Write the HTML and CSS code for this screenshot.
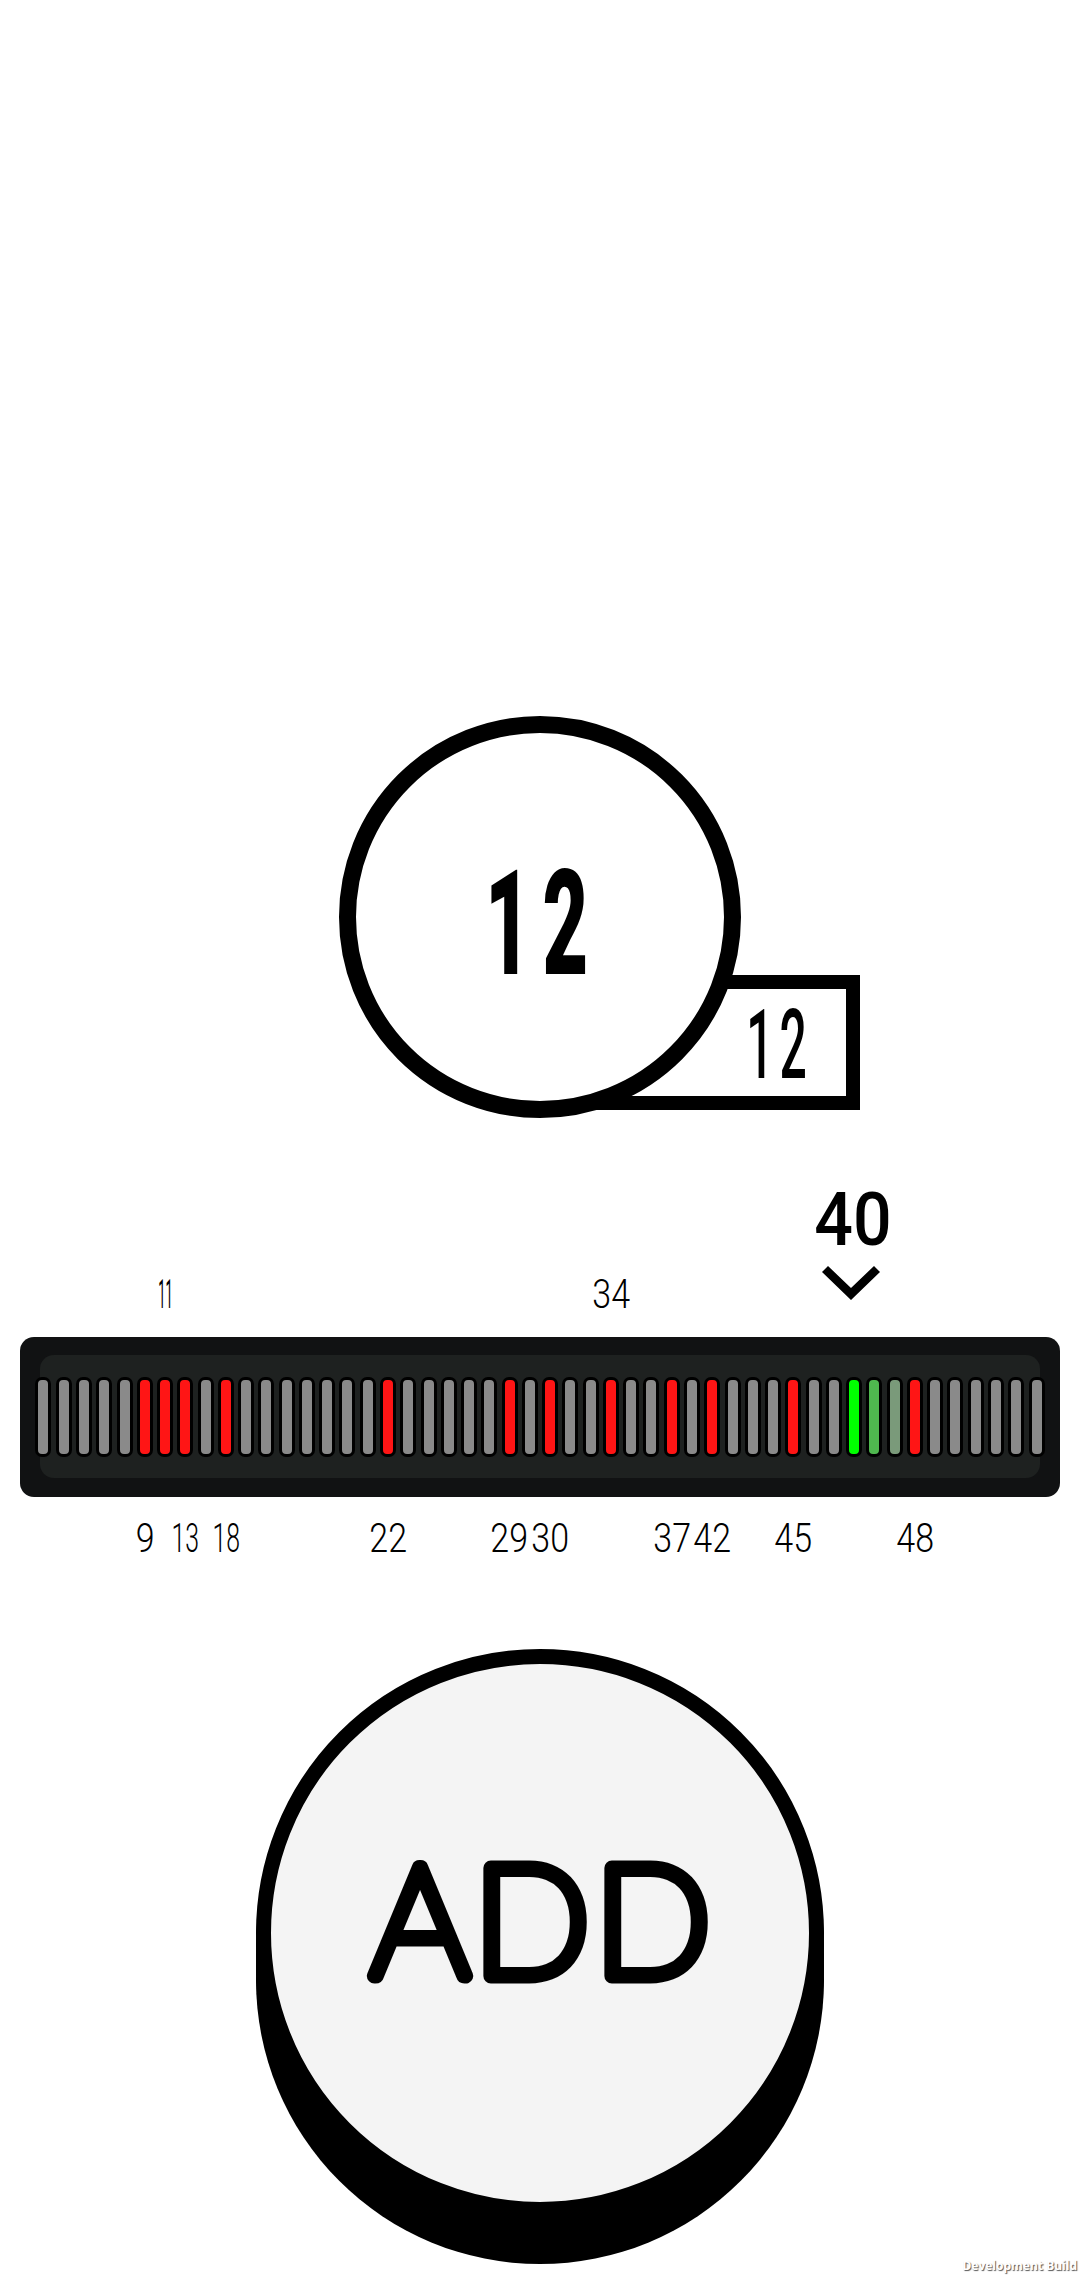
FILE: index.html
```html
<!DOCTYPE html>
<html lang="en">

<head>
    <meta charset="UTF-8">
    <meta name="viewport" content="width=device-width, initial-scale=1.0">
    <title>Counter</title>
    <link rel="stylesheet" href="styles.css">
</head>

<body>
    <main class="page">
        <section class="counter">
            <div class="counter-box"><span class="digits digits-mid">12</span></div>
            <div class="counter-circle"><span class="digits digits-big">12</span></div>
        </section>

        <!-- marks sit on the same 50 column grid as the ticks -->
        <div class="scale scale-top">
            <span class="digits digits-small ones" style="grid-column: 7">11</span>
            <span class="digits digits-small" style="grid-column: 29">34</span>
            <div class="pointer" style="grid-column: 41">
                <span class="digits digits-pointer">40</span>
                <svg class="chevron" width="58" height="34" viewBox="0 0 58 34">
                    <polygon points="0,6 6,0 29,22 52,0 58,6 29,34"></polygon>
                </svg>
            </div>
        </div>

        <div class="bar">
            <div class="bar-inner">
                <div class="scale ticks">
                    <i class="tick"></i><i class="tick"></i><i class="tick"></i><i class="tick"></i><i class="tick"></i>
                    <i class="tick red"></i><i class="tick red"></i><i class="tick red"></i><i class="tick"></i><i class="tick red"></i>
                    <i class="tick"></i><i class="tick"></i><i class="tick"></i><i class="tick"></i><i class="tick"></i>
                    <i class="tick"></i><i class="tick"></i><i class="tick red"></i><i class="tick"></i><i class="tick"></i>
                    <i class="tick"></i><i class="tick"></i><i class="tick"></i><i class="tick red"></i><i class="tick"></i>
                    <i class="tick red"></i><i class="tick"></i><i class="tick"></i><i class="tick red"></i><i class="tick"></i>
                    <i class="tick"></i><i class="tick red"></i><i class="tick"></i><i class="tick red"></i><i class="tick"></i>
                    <i class="tick"></i><i class="tick"></i><i class="tick red"></i><i class="tick"></i><i class="tick"></i>
                    <i class="tick green"></i><i class="tick green-mid"></i><i class="tick green-low"></i><i class="tick red"></i><i class="tick"></i>
                    <i class="tick"></i><i class="tick"></i><i class="tick"></i><i class="tick"></i><i class="tick"></i>
                </div>
            </div>
        </div>

        <div class="scale scale-bottom">
            <span class="digits digits-small" style="grid-column: 6">9</span>
            <span class="digits digits-small has-one" style="grid-column: 8">13</span>
            <span class="digits digits-small has-one" style="grid-column: 10">18</span>
            <span class="digits digits-small" style="grid-column: 18">22</span>
            <span class="digits digits-small" style="grid-column: 24">29</span>
            <span class="digits digits-small" style="grid-column: 26">30</span>
            <span class="digits digits-small" style="grid-column: 32">37</span>
            <span class="digits digits-small" style="grid-column: 34">42</span>
            <span class="digits digits-small" style="grid-column: 38">45</span>
            <span class="digits digits-small" style="grid-column: 44">48</span>
        </div>

        <button class="add-button">
            <svg class="add-label" width="400" height="160" viewBox="0 0 400 160">
                <text x="203" y="138" text-anchor="middle">ADD</text>
            </svg>
        </button>
    </main>

    <span class="build-tag">Development Build</span>
</body>

</html>
```

FILE: styles.css
```css
html, body {
    margin: 0;
    height: 2280px;
    overflow: hidden;
    background: #fff;
    font-family: Roboto, sans-serif;
}
.page {
    display: flex;
    flex-direction: column;
    align-items: center;
    padding-top: 716px;
}

/* counter circle + box behind it */
.counter {
    position: relative;
    width: 402px;
    height: 402px;
}
.counter-circle {
    position: relative;
    box-sizing: border-box;
    width: 402px;
    height: 402px;
    padding: 15px 0 0 6px;
    border: 17px solid #000;
    border-radius: 50%;
    background: #fff;
    display: flex;
    align-items: center;
    justify-content: center;
}
.counter-box {
    position: absolute;
    left: 200px;
    top: 259px;
    box-sizing: border-box;
    width: 321px;
    height: 135px;
    padding-top: 4px;
    border: 14px solid #000;
    background: #fff;
    display: flex;
    align-items: center;
    justify-content: flex-end;
}

/* lcd style numbers */
.digits {
    display: block;
    color: #000;
    white-space: nowrap;
    text-align: center;
}
.digits-big {
    font-size: 146px;
    font-weight: 900;
    line-height: 110px;
    letter-spacing: 22px;
    transform: scaleX(.54);
}
.digits-mid {
    font-size: 96px;
    font-weight: 500;
    line-height: 72px;
    letter-spacing: 12px;
    transform: scaleX(.5);
}
.digits-pointer {
    font-size: 74px;
    font-weight: 500;
    line-height: 56px;
    transform: scaleX(.92);
}
.digits-small {
    font-size: 40px;
    font-weight: 300;
    line-height: 30px;
    justify-self: center;
    transform: scaleX(.85);
}
.has-one {
    transform: scaleX(.62);
}
.ones {
    font-weight: 400;
    transform: scaleX(.32);
}

/* 50 columns, shared by ticks and marks */
.scale {
    display: grid;
    grid-template-columns: repeat(50, 20.27px);
}
.scale-top {
    height: 118px;
    margin-top: 74px;
    align-items: end;
}
.scale-bottom {
    height: 30px;
    margin-top: 27px;
    align-items: center;
}
.pointer {
    grid-row: 1;
    justify-self: center;
    display: flex;
    flex-direction: column;
    align-items: center;
    gap: 18px;
    margin: 0 3px 10px 0;
}
.chevron {
    display: block;
    margin-right: 4px;
    fill: #000;
}
.scale-top .digits-small {
    grid-row: 1;
}

.bar {
    box-sizing: border-box;
    width: 1040px;
    height: 160px;
    margin-top: 27px;
    padding: 18px 20px 19px;
    background: #111213;
    border-radius: 14px;
}
.bar-inner {
    height: 100%;
    background: #1e2120;
    border-radius: 14px;
    display: flex;
    align-items: center;
    justify-content: center;
}
.ticks {
    flex: none;
}
.tick {
    box-sizing: border-box;
    justify-self: center;
    width: 16px;
    height: 80px;
    border: 3px solid #000;
    border-radius: 7px;
    background: #8a8a8a;
}
.red {
    background: #ff1515;
}
.green {
    background: #00ff00;
}
.green-mid {
    background: #4fb84f;
}
.green-low {
    background: #7a9a7a;
}

.add-button {
    box-sizing: border-box;
    width: 568px;
    height: 568px;
    margin-top: 95px;
    padding: 0 0 30px;
    border: 15px solid #000;
    border-radius: 50%;
    background: #f4f4f4;
    box-shadow: 0 12px 0 #000, 0 24px 0 #000, 0 36px 0 #000, 0 47px 0 #000;
    display: flex;
    align-items: center;
    justify-content: center;
}
.add-label {
    display: block;
    overflow: visible;
}
.add-label text {
    font-family: Lato, sans-serif;
    font-size: 154px;
    font-weight: 100;
    letter-spacing: 4px;
    fill: #000;
    stroke: #000;
    stroke-width: 15px;
    stroke-linejoin: round;
}

.build-tag {
    position: absolute;
    right: 3px;
    bottom: 6px;
    font-family: "Open Sans", sans-serif;
    font-size: 12px;
    font-weight: 700;
    color: #fff;
    text-shadow: 1px 1px 1px #555;
}
```
